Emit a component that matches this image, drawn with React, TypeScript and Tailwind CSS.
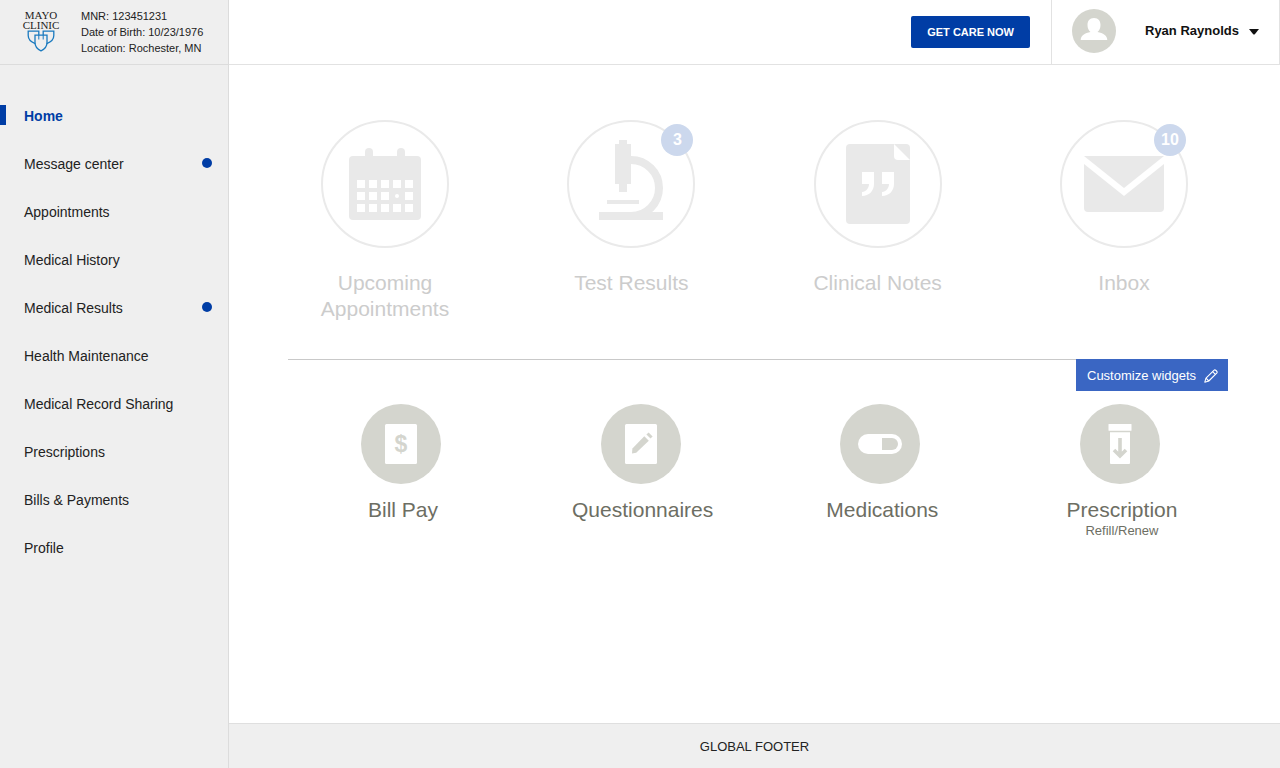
import type { ReactNode } from "react";

const navItems = [
  { label: "Home", active: true },
  { label: "Message center", unread: true },
  { label: "Appointments" },
  { label: "Medical History" },
  { label: "Medical Results", unread: true },
  { label: "Health Maintenance" },
  { label: "Medical Record Sharing" },
  { label: "Prescriptions" },
  { label: "Bills & Payments" },
  { label: "Profile" },
];

function ClinicLogo() {
  return (
    <a
      href="#home"
      aria-label="Mayo Clinic"
      className="flex w-10 shrink-0 flex-col items-center font-['Liberation_Serif',serif] text-[11px] leading-[10px] text-[#222]"
    >
      <span>MAYO</span>
      <span>CLINIC</span>
      <svg width="28" height="22" viewBox="0 0 28 22" fill="none" stroke="#1a7abf" strokeWidth="1.3">
        <path d="M8.200 13.600C4 12 1.200 9.200 1.200 5.500V1.200H11.800V5" />
        <path d="M19.800 13.600C24 12 26.800 9.200 26.800 5.500V1.200H16.200V5" />
        <path d="M8 5.200H20V12.500C20 16.500 17.500 19.300 14 20.800C10.500 19.300 8 16.500 8 12.500Z" />
        <path d="M11.800 5V9.500M16.200 5V9.500" strokeWidth="1" />
      </svg>
    </a>
  );
}

function CalendarIcon() {
  const columns = [36, 48, 60, 72, 84];
  const rows = [60, 72, 84];
  return (
    <svg viewBox="0 0 128 128" className="size-full" fill="#e9e9e9">
      <rect x="28" y="36" width="72" height="64" rx="4" />
      <rect x="44" y="28" width="8" height="12" rx="4" />
      <rect x="76" y="28" width="8" height="12" rx="4" />
      {rows.map((y) =>
        columns.map((x) =>
          x === 72 && y === 72 ? (
            <circle key={`${x}-${y}`} cx="76" cy="76" r="2" fill="#fff" />
          ) : (
            <rect key={`${x}-${y}`} x={x} y={y} width="8" height="8" fill="#fff" />
          ),
        ),
      )}
    </svg>
  );
}

function MicroscopeIcon() {
  return (
    <svg viewBox="0 0 128 128" className="size-full" fill="#e9e9e9">
      <path d="M52 20H60V24H64V64H60V72H52V64H48V24H52Z" />
      <path d="M64 40A28 28 0 0 1 64 96" fill="none" stroke="#e9e9e9" strokeWidth="8" />
      <rect x="40" y="80" width="32" height="4" />
      <rect x="32" y="92" width="64" height="8" />
    </svg>
  );
}

function NotesIcon() {
  return (
    <svg viewBox="0 0 128 128" className="size-full" fill="#e9e9e9">
      <rect x="32" y="24" width="64" height="80" rx="4" />
      <g fill="#fff">
        <path d="M80 24L96 40H84Q80 40 80 36Z" />
        <path d="M48 52H60V64C60 71 55 76 48 76V72C52 72 55 68 55 64H48Z" />
        <path d="M68 52H80V64C80 71 75 76 68 76V72C72 72 75 68 75 64H68Z" />
      </g>
    </svg>
  );
}

function MailIcon() {
  return (
    <svg viewBox="0 0 128 128" className="size-full" fill="#e9e9e9">
      <path d="M24 36H104L64 68Z" />
      <path d="M24 44L64 76L104 44V88Q104 92 100 92H28Q24 92 24 88Z" />
    </svg>
  );
}

function BillIcon() {
  return (
    <svg viewBox="0 0 80 80" className="size-full">
      <rect x="24" y="20" width="32" height="40" rx="1.500" fill="#fff" />
      <text x="40" y="48" textAnchor="middle" fill="#d4d5ce" className="font-['Liberation_Sans',sans-serif] text-[23px] font-bold">
        $
      </text>
    </svg>
  );
}

function FormIcon() {
  return (
    <svg viewBox="0 0 80 80" className="size-full" fill="#d4d5ce">
      <rect x="24" y="20" width="32" height="40" rx="1.500" fill="#fff" />
      <path d="M43.300 32.200L47.800 36.700L35.200 48.800L31 49.400L31.400 44.400Z" />
      <path d="M45.400 30.500L47.600 28.400L51.600 32.400L49.500 34.600Z" />
    </svg>
  );
}

function PillIcon() {
  return (
    <svg viewBox="0 0 80 80" className="size-full">
      <rect x="18" y="30" width="44" height="20" rx="10" fill="#fff" />
      <path d="M42 34H52A6 6 0 0 1 52 46H42Z" fill="#d4d5ce" />
    </svg>
  );
}

function BottleIcon() {
  return (
    <svg viewBox="0 0 80 80" className="size-full" fill="#fff">
      <rect x="28.500" y="20" width="23" height="6.700" rx="0.500" />
      <path d="M30 28.200H50V59Q50 60 49 60H31Q30 60 30 59Z" />
      <path d="M40 34V51.500M34 46L40 52L46 46" fill="none" stroke="#d4d5ce" strokeWidth="3.600" />
    </svg>
  );
}

type Widget = { label: string; icon: ReactNode; badge?: number; note?: string };

const primaryWidgets: Widget[] = [
  { label: "Upcoming Appointments", icon: <CalendarIcon /> },
  { label: "Test Results", icon: <MicroscopeIcon />, badge: 3 },
  { label: "Clinical Notes", icon: <NotesIcon /> },
  { label: "Inbox", icon: <MailIcon />, badge: 10 },
];

const secondaryWidgets: Widget[] = [
  { label: "Bill Pay", icon: <BillIcon /> },
  { label: "Questionnaires", icon: <FormIcon /> },
  { label: "Medications", icon: <PillIcon /> },
  { label: "Prescription", icon: <BottleIcon />, note: "Refill/Renew" },
];

function Sidebar() {
  return (
    <aside className="flex w-[229px] shrink-0 flex-col border-r border-[#dcdcdc] bg-[#efefef]">
      <div className="flex h-[65px] items-start gap-5 border-b border-[#dcdcdc] pt-2 pl-[21px]">
        <div className="pt-[2px]">
          <ClinicLogo />
        </div>
        <div className="text-[11px] leading-4 whitespace-nowrap">
          <p>MNR: 123451231</p>
          <p>Date of Birth: 10/23/1976</p>
          <p>Location: Rochester, MN</p>
        </div>
      </div>
      <nav className="pt-[26px]">
        <ul>
          {navItems.map((item) => (
            <li key={item.label}>
              <a
                href="#"
                aria-current={item.active ? "page" : undefined}
                className={
                  item.active
                    ? "flex h-12 items-center text-sm font-bold text-[#003da5]"
                    : "flex h-12 items-center pr-4 text-sm"
                }
              >
                <span className={item.active ? "h-5 w-[6px] bg-[#003da5]" : "w-[6px]"} />
                <span className="flex-1 pt-[2px] pl-[18px]">{item.label}</span>
                {item.unread && <span className="size-[10px] rounded-full bg-[#003da5]" />}
              </a>
            </li>
          ))}
        </ul>
      </nav>
    </aside>
  );
}

function Header() {
  return (
    <header className="flex h-[65px] items-stretch justify-end border-b border-[#e2e2e2]">
      <div className="flex items-center pr-[21px]">
        <button type="button" className="h-8 rounded-[2px] bg-[#003da5] px-4 text-[11px] font-bold text-white">
          GET CARE NOW
        </button>
      </div>
      <button
        type="button"
        className="flex w-[229px] items-center border-x border-[#e2e2e2] pb-[2px] pl-5 text-[13px] font-bold text-[#111]"
      >
        <svg className="size-11 shrink-0" viewBox="0 0 44 44">
          <circle cx="22" cy="22" r="22" fill="#d4d5ce" />
          <path
            d="M22 9C26.500 9 28.500 12 28.500 16C28.500 19 27.400 21.500 25.500 23C31 24 35.300 26.500 35.300 31H8.700C8.700 26.500 13 24 18.500 23C16.600 21.500 15.500 19 15.500 16C15.500 12 17.500 9 22 9Z"
            fill="#fff"
          />
        </svg>
        <span className="pl-[29px]">Ryan Raynolds</span>
        <svg className="ml-[10px] size-[10px]" viewBox="0 0 10 10">
          <path d="M0 3H10L6 8Q5 9 4 8Z" fill="#111" />
        </svg>
      </button>
    </header>
  );
}

export default function App() {
  return (
    <div className="flex min-h-screen bg-white font-['Liberation_Sans',Arial,sans-serif] text-[#222]">
      <Sidebar />
      <div className="flex min-w-0 flex-1 flex-col">
        <Header />
        <main className="flex-1 pt-[55px] pr-[52px] pl-[59px]">
          <section className="flex items-start justify-between pr-10 pl-[33px]">
            {primaryWidgets.map((widget) => (
              <a key={widget.label} href="#" className="flex w-32 flex-col items-center">
                <span className="relative size-32">
                  <span className="absolute inset-0 rounded-full border-2 border-[#eaeaea]" />
                  <span className="absolute inset-0">{widget.icon}</span>
                  {widget.badge && (
                    <span className="absolute top-1 right-[2px] flex size-8 items-center justify-center rounded-full bg-[#ccd8ed] text-base font-bold text-white">
                      {widget.badge}
                    </span>
                  )}
                </span>
                <span className="mt-[22px] flex w-36 justify-center text-center text-[21px] leading-[26px] text-[#ccc]">
                  {widget.label}
                </span>
              </a>
            ))}
          </section>

          <div className="mt-[37px] flex items-start">
            <div className="h-px flex-1 bg-[#c9c9c9]" />
            <button
              type="button"
              className="flex h-8 w-[152px] items-center gap-2 bg-[#3a66c3] pt-px pl-[11px] text-[13px] whitespace-nowrap text-white"
            >
              Customize widgets
              <svg className="size-[14px]" viewBox="0 0 14 14" fill="none" stroke="#fff" strokeWidth="1.100" strokeLinejoin="round">
                <path d="M0.800 13.200L2 9.200L9.900 1.300Q10.900 0.400 12 1.500L12.500 2Q13.600 3.100 12.700 4.100L4.800 12L0.800 13.200Z" />
                <path d="M8.600 2.600L11.400 5.400M2 9.200L4.800 12" />
              </svg>
            </button>
          </div>

          <section className="mt-[13px] flex items-start justify-between pr-[68px] pl-[73px] text-[#6d6e63]">
            {secondaryWidgets.map((widget) => (
              <a key={widget.label} href="#" className="flex w-20 flex-col items-center">
                <span className="size-20 rounded-full bg-[#d4d5ce]">{widget.icon}</span>
                <span className="mt-[13px] flex flex-col items-center pl-1 whitespace-nowrap">
                  <span className="text-[21px] leading-[26px]">{widget.label}</span>
                  {widget.note && <span className="text-[13px] leading-4">{widget.note}</span>}
                </span>
              </a>
            ))}
          </section>
        </main>
        <footer className="flex h-[45px] items-center justify-center border-t border-[#dfdfdf] bg-[#efefef] pt-px text-[13px]">
          GLOBAL FOOTER
        </footer>
      </div>
    </div>
  );
}
